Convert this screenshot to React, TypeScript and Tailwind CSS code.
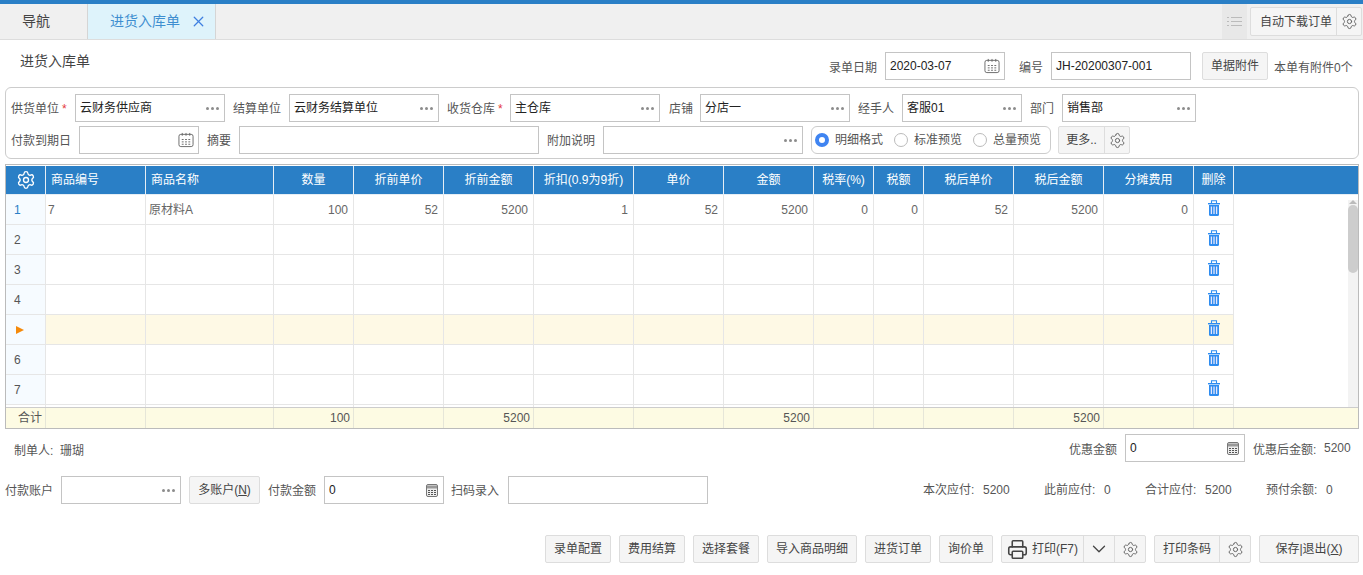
import { ChevronDown, Printer, Settings, X } from "lucide-react";
import React from "react";

const columns = [
  { w: 40, title: "" },
  { w: 100, title: "商品编号", left: true },
  { w: 128, title: "商品名称", left: true },
  { w: 80, title: "数量" },
  { w: 90, title: "折前单价" },
  { w: 90, title: "折前金额" },
  { w: 100, title: "折扣(0.9为9折)" },
  { w: 90, title: "单价" },
  { w: 90, title: "金额" },
  { w: 60, title: "税率(%)" },
  { w: 50, title: "税额" },
  { w: 90, title: "税后单价" },
  { w: 90, title: "税后金额" },
  { w: 90, title: "分摊费用" },
  { w: 40, title: "删除" },
];

const firstRow = ["7", "原材料A", "100", "52", "5200", "1", "52", "5200", "0", "0", "52", "5200", "0"];
const footRow = ["", "", "100", "", "5200", "", "", "5200", "", "", "", "5200", ""];

const Dots = () => (
  <span className="flex gap-[2px]">
    <i className="w-[3px] h-[3px] rounded-full bg-[#8c8c8c]" />
    <i className="w-[3px] h-[3px] rounded-full bg-[#8c8c8c]" />
    <i className="w-[3px] h-[3px] rounded-full bg-[#8c8c8c]" />
  </span>
);

const CalendarIcon = () => (
  <svg width="16" height="16" viewBox="0 0 17 16" fill="none" stroke="#666" strokeWidth="1" className="mr-[-1px]">
    <rect x="1" y="2" width="15" height="13" rx="2" />
    <path d="M4.5 .5v3M8.5 .5v3M12.5 .5v3" />
    <path d="M4 7.5h2M7.5 7.5h2M11 7.5h2M4 10h2M7.5 10h2M11 10h2M4 12.5h2M7.5 12.5h2M11 12.5h2" />
  </svg>
);

const CalcIcon = () => (
  <svg width="12" height="13" viewBox="0 0 12 13">
    <rect x=".5" y=".5" width="11" height="12" rx="1.5" fill="#eee" stroke="#777" />
    <rect x="1" y="1.5" width="10" height="3" fill="#999" />
    <path d="M2 6.5h2M5 6.5h2M8 6.5h2M2 8.5h2M5 8.5h2M8 8.5h2M2 10.5h2M5 10.5h2M8 10.5h2" stroke="#555" />
  </svg>
);

const TrashIcon = () => (
  <svg width="12" height="16" viewBox="0 0 12 16">
    <path d="M3.5 3V.7h5V3" stroke="#2d8cf0" strokeWidth="1.1" fill="none" />
    <rect x="0" y="3" width="12" height="1.4" fill="#2d8cf0" />
    <path d="M1 5h10v9.5a1.5 1.5 0 0 1-1.5 1.5h-7A1.5 1.5 0 0 1 1 14.5z" fill="#2d8cf0" />
    <path d="M3.4 6.5v7.5M6 6.5v7.5M8.6 6.5v7.5" stroke="#e6e6fa" strokeWidth="1.3" />
  </svg>
);

const Input = ({ w, value, icon }: { w: number; value?: string; icon?: React.ReactNode }) => (
  <div
    style={{ width: w }}
    className="h-[28px] shrink-0 border border-[#c4c4c4] bg-white flex items-center justify-between pl-[4px] pr-[5px] text-[#222] whitespace-nowrap"
  >
    <span>{value}</span>
    {icon}
  </div>
);

const Field = ({
  label,
  labelW,
  w,
  value,
  icon,
  required,
}: {
  label: string;
  labelW: number;
  w: number;
  value?: string;
  icon?: React.ReactNode;
  required?: boolean;
}) => (
  <div className="flex items-center shrink-0">
    <div style={{ width: labelW }} className="shrink-0 text-[#555] whitespace-nowrap pt-[2px]">
      {label}
      {required && <span className="text-[#e4393c] ml-[3px]">*</span>}
    </div>
    <Input w={w} value={value} icon={icon} />
  </div>
);

const Btn = ({ w, children, className = "" }: { w: number; children: React.ReactNode; className?: string }) => (
  <div
    style={{ width: w }}
    className={`h-[28px] shrink-0 flex items-center justify-center border border-[#ddd] rounded-[2px] bg-[#f5f5f5] text-[#444] whitespace-nowrap ${className}`}
  >
    {children}
  </div>
);

const Gear = ({ size = 17, color = "#666" }: { size?: number; color?: string }) => (
  <Settings size={size} color={color} strokeWidth={1.4} />
);

const Radio = ({ label, checked }: { label: string; checked?: boolean }) => (
  <div className="flex items-center gap-[6px] text-[#555]">
    {checked ? (
      <span className="w-[14px] h-[14px] rounded-full border-[4px] border-[#3f84f1] bg-white" />
    ) : (
      <span className="w-[14px] h-[14px] rounded-full border border-[#bbb] bg-white" />
    )}
    {label}
  </div>
);

const Pair = ({ label, value, w }: { label: string; value: string; w: number }) => (
  <div style={{ width: w }} className="flex shrink-0 text-[#555] whitespace-nowrap">
    <span className="w-[60px]">{label}:</span>
    <span>{value}</span>
  </div>
);

const GridRow = ({ index }: { index: number }) => {
  const active = index === 4;
  const cellBg = active ? "bg-[#fef9e5]" : "";
  return (
    <div className="flex h-[30px]">
      <div className="w-[40px] shrink-0 flex items-center pl-[8px] bg-[#f6fbff] border-r border-b border-[#e6e6e6] text-[#555]">
        {active ? (
          <span className="w-0 h-0 border-y-[4px] border-y-transparent border-l-[8px] border-l-[#f58a0b] ml-[2px]" />
        ) : (
          <span className={index === 0 ? "text-[#2a7fc6]" : ""}>{index + 1}</span>
        )}
      </div>
      {columns.slice(1, -1).map((c, i) => (
        <div
          key={c.title}
          style={{ width: c.w }}
          className={`shrink-0 flex items-center border-r border-b border-[#e6e6e6] text-[#666] ${cellBg} ${
            i === 0 ? "pl-[2px]" : c.left ? "pl-[3px]" : "justify-end pr-[5px]"
          }`}
        >
          {index === 0 ? firstRow[i] : ""}
        </div>
      ))}
      <div className={`w-[40px] shrink-0 flex justify-center pt-[5px] border-r border-b border-[#e6e6e6] ${cellBg}`}>
        <TrashIcon />
      </div>
    </div>
  );
};

const App = () => {
  return (
    <div className="w-[1363px] h-[575px] overflow-hidden bg-white text-[12px] font-[family-name:'Liberation_Sans','Noto_Sans_CJK_SC',sans-serif]">
      <div className="h-[4px] bg-[#2a7fc6]" />

      <div className="h-[36px] flex bg-[#f0f0f0] border-b border-[#ddd]">
        <div className="w-[87px] flex items-center pl-[22px] text-[14px] text-[#444]">导航</div>
        <div className="w-[129px] flex items-center pl-[22px] bg-[#def3fb] border-x border-[#d5d5d5] text-[14px] text-[#3f8fd0]">
          进货入库单
          <X size={17} color="#3f7fe0" strokeWidth={1.8} className="ml-[10px]" />
        </div>
        <div className="ml-auto w-[25px] mr-[3px] bg-[#e8e8e8] flex items-center justify-center">
          <svg width="15" height="11" viewBox="0 0 15 11" stroke="#bbb" strokeWidth="1">
            <path d="M0 1.5h2M4 1.5h11M0 5.5h2M4 5.5h11M0 9.5h2M4 9.5h11" />
          </svg>
        </div>
        <div className="flex h-[29px] mt-[3px] mr-[1px] border border-[#ddd] rounded-[2px] bg-[#f5f5f5] text-[#444]">
          <div className="w-[86px] flex items-center pl-[9px] border-r border-[#ddd] whitespace-nowrap">自动下载订单</div>
          <div className="w-[24px] flex items-center justify-center">
            <Gear />
          </div>
        </div>
      </div>

      <div className="flex h-[47px] pt-[12px]">
        <div className="w-[829px] pl-[20px] text-[14px] text-[#444] leading-[18px]">进货入库单</div>
        <div className="flex items-center h-[28px]">
          <div className="w-[56px] text-[#555] pt-[4px]">录单日期</div>
          <Input w={120} value="2020-03-07" icon={<CalendarIcon />} />
          <div className="w-[32px] ml-[14px] text-[#555] pt-[4px]">编号</div>
          <Input w={140} value="JH-20200307-001" />
          <Btn w={66} className="ml-[11px]">
            单据附件
          </Btn>
          <div className="ml-[6px] text-[#555] whitespace-nowrap pt-[4px]">本单有附件0个</div>
        </div>
      </div>

      <div className="ml-[5px] w-[1354px] h-[72px] border border-[#ccc] rounded-[6px] pl-[5px] pt-[6px]">
        <div className="flex h-[28px] gap-[8px]">
          <Field label="供货单位" required labelW={64} w={150} value="云财务供应商" icon={<Dots />} />
          <Field label="结算单位" labelW={56} w={150} value="云财务结算单位" icon={<Dots />} />
          <Field label="收货仓库" required labelW={63} w={150} value="主仓库" icon={<Dots />} />
          <div className="ml-[1px]">
            <Field label="店铺" labelW={31} w={150} value="分店一" icon={<Dots />} />
          </div>
          <Field label="经手人" labelW={44} w={120} value="客服01" icon={<Dots />} />
          <Field label="部门" labelW={32} w={134} value="销售部" icon={<Dots />} />
        </div>
        <div className="flex h-[28px] gap-[8px] mt-[4px]">
          <Field label="付款到期日" labelW={68} w={120} icon={<CalendarIcon />} />
          <Field label="摘要" labelW={32} w={300} />
          <Field label="附加说明" labelW={56} w={200} icon={<Dots />} />
          <div className="w-[240px] h-[28px] border border-[#ccc] rounded-[6px] flex items-center pl-[3px] gap-[11px]">
            <Radio label="明细格式" checked />
            <Radio label="标准预览" />
            <Radio label="总量预览" />
          </div>
          <div className="flex ml-[-1px] h-[28px] border border-[#ddd] rounded-[2px] bg-[#f5f5f5] text-[#444]">
            <div className="w-[46px] flex items-center justify-center border-r border-[#ddd]">更多..</div>
            <div className="w-[24px] flex items-center justify-center">
              <Gear />
            </div>
          </div>
        </div>
      </div>

      <div className="ml-[5px] mt-[5px] w-[1354px] h-[265px] border border-[#bbb] pt-[1px] flex flex-col">
        <div className="flex h-[29px] shrink-0 bg-[#2a7fc6] border-b border-[#e6eef5] text-white">
          <div className="w-[40px] flex items-center justify-center border-r border-[#e6eef5]">
            <Settings size={20} color="#fff" strokeWidth={1.6} />
          </div>
          {columns.slice(1).map((c) => (
            <div
              key={c.title}
              style={{ width: c.w }}
              className={`flex items-center border-r border-[#e6eef5] whitespace-nowrap ${
                c.left ? "pl-[5px]" : "justify-center"
              }`}
            >
              {c.title}
            </div>
          ))}
        </div>

        <div className="flex h-[212px] shrink-0 overflow-hidden">
          <div className="w-[1342px] h-[212px] overflow-hidden">
            {[0, 1, 2, 3, 4, 5, 6].map((i) => (
              <GridRow key={i} index={i} />
            ))}
            <div className="flex h-[2px]">
              {columns.map((c) => (
                <div key={c.title} style={{ width: c.w }} className="border-r border-[#e6e6e6]" />
              ))}
            </div>
          </div>
          <div className="w-[10px] mt-[5px] h-[207px] bg-[#f3f3f3] flex flex-col items-center">
            <span className="h-0 w-0 border-x-[4px] border-x-transparent border-b-[4px] border-b-[#bbb]" />
            <span className="w-[10px] h-[68px] mt-[1px] rounded-[5px] bg-[#cdcdcd]" />
          </div>
        </div>

        <div className="flex h-[21px] shrink-0 bg-[#fdfbe3] border-t border-[#ccc] text-[#555]">
          <div className="w-[40px] flex items-center pl-[12px] border-r border-[#e6e6d8]">合计</div>
          {columns.slice(1).map((c, i) => (
            <div
              key={c.title}
              style={{ width: c.w }}
              className="flex items-center justify-end pr-[3px] border-r border-[#e6e6d8]"
            >
              {footRow[i]}
            </div>
          ))}
        </div>
      </div>

      <div className="flex h-[28px] mt-[5px] items-center">
        <div className="w-[1069px] pl-[14px] text-[#555] pt-[5px]">制单人:&nbsp;&nbsp;珊瑚</div>
        <div className="w-[56px] text-[#555] pt-[3px]">优惠金额</div>
        <Input w={120} value="0" icon={<CalcIcon />} />
        <div className="ml-[8px] w-[71px] text-[#555] whitespace-nowrap pt-[3px]">优惠后金额:</div>
        <div className="text-[#555]">5200</div>
      </div>

      <div className="flex h-[28px] mt-[14px] items-center pl-[5px]">
        <div className="w-[56px] text-[#555] pt-[2px]">付款账户</div>
        <Input w={120} icon={<Dots />} />
        <Btn w={71} className="ml-[8px]">
          <span>
            多账户(<span className="underline">N</span>)
          </span>
        </Btn>
        <div className="w-[56px] ml-[8px] text-[#555] pt-[2px]">付款金额</div>
        <Input w={120} value="0" icon={<CalcIcon />} />
        <div className="w-[57px] ml-[7px] text-[#555] pt-[2px]">扫码录入</div>
        <Input w={200} />
        <div className="flex ml-[215px]">
          <Pair label="本次应付" value="5200" w={121} />
          <Pair label="此前应付" value="0" w={101} />
          <Pair label="合计应付" value="5200" w={121} />
          <Pair label="预付余额" value="0" w={80} />
        </div>
      </div>

      <div className="flex h-[28px] mt-[31px] pl-[545px] gap-[8px]">
        <Btn w={66}>录单配置</Btn>
        <Btn w={66}>费用结算</Btn>
        <Btn w={66}>选择套餐</Btn>
        <Btn w={90}>导入商品明细</Btn>
        <Btn w={66}>进货订单</Btn>
        <Btn w={54}>询价单</Btn>
        <div className="flex w-[145px] h-[28px] border border-[#ddd] rounded-[2px] bg-[#f5f5f5] text-[#444]">
          <div className="w-[82px] flex items-center justify-center gap-[4px] border-r border-[#ddd]">
            <Printer size={21} color="#444" strokeWidth={1.8} />
            打印(F7)
          </div>
          <div className="w-[31px] flex items-center justify-center border-r border-[#ddd]">
            <ChevronDown size={22} color="#444" strokeWidth={1.4} />
          </div>
          <div className="flex-1 flex items-center justify-center">
            <Gear />
          </div>
        </div>
        <div className="flex w-[97px] h-[28px] border border-[#ddd] rounded-[2px] bg-[#f5f5f5] text-[#444]">
          <div className="w-[65px] flex items-center justify-center border-r border-[#ddd]">打印条码</div>
          <div className="flex-1 flex items-center justify-center">
            <Gear />
          </div>
        </div>
        <Btn w={100}>
          <span>
            保存|退出(<span className="underline">X</span>)
          </span>
        </Btn>
      </div>
    </div>
  );
};

export default App;
